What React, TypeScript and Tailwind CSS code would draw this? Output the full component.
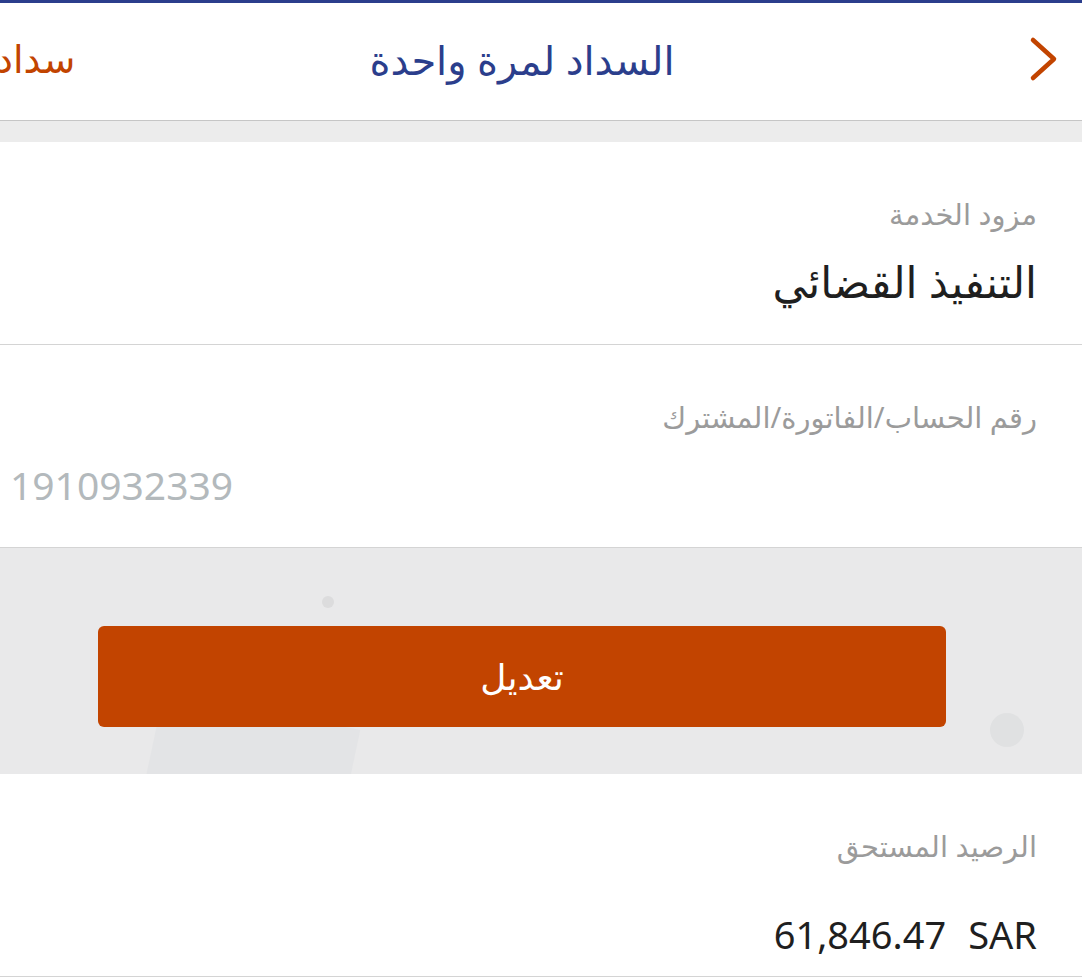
const font = { fontFamily: '"Noto Sans", "DejaVu Sans", sans-serif' }

function Field({ label, children }: { label: string; children: React.ReactNode }) {
  return (
    <div className="bg-white border-b border-[#d4d4d4] h-[203px] flex flex-col pr-[45px]">
      <div className="pt-[54px] text-[29px] leading-[36px] text-[#9b9b9b]">{label}</div>
      <div className="mt-[28px]">{children}</div>
    </div>
  )
}

export default function App() {
  return (
    <div dir="rtl" className="w-[1082px] h-[977px] overflow-hidden bg-white" style={font}>
      <div className="h-[3px] bg-[#2b3e8c]" />
      <header className="relative h-[118px] bg-white border-b border-[#c6c6c6] flex items-center justify-between">
        <svg viewBox="0 0 30 46" className="w-[30px] h-[46px] mr-[24px] mt-[-6px]" fill="none">
          <polyline points="5,4 26,23 5,42" stroke="#c24400" strokeWidth="4.5" strokeLinecap="round" strokeLinejoin="round" />
        </svg>
        <h1 className="absolute left-0 right-0 pr-[38px] mt-[-4px] text-center text-[40px] text-[#2b3e8c] pointer-events-none">
          السداد لمرة واحدة
        </h1>
        <span className="ml-[-4px] text-[38px] text-[#c24400] mt-[-6px]">سداد</span>
      </header>
      <div className="h-[21px] bg-[#ececec]" />

      <Field label="مزود الخدمة">
        <div className="text-[43px] leading-[44px] text-[#1f1f1f]">التنفيذ القضائي</div>
      </Field>

      <Field label="رقم الحساب/الفاتورة/المشترك">
        <div dir="ltr" className="text-left pl-[10px] text-[39px] leading-[44px] text-[#b3b9bc]">1910932339</div>
      </Field>

      <div className="relative h-[226px] bg-[#e9e9ea] flex items-start justify-start pt-[78px] overflow-hidden">
        <div className="absolute left-[150px] top-[160px] w-[200px] h-[120px] bg-[#e3e4e6] rotate-12" />
        <div className="absolute left-[990px] top-[165px] w-[34px] h-[34px] rounded-full bg-[#e0e1e2]" />
        <div className="absolute left-[322px] top-[48px] w-[12px] h-[12px] rounded-full bg-[#dcdcdd]" />
        <button className="relative mr-[136px] w-[848px] h-[101px] rounded-[6px] bg-[#c24400] text-white text-[36px]">
          تعديل
        </button>
      </div>

      <Field label="الرصيد المستحق">
        <div dir="ltr" className="text-right text-[38px] leading-[44px] text-[#1f1f1f] mt-[20px]">
          61,846.47<span className="ml-[22px]">SAR</span>
        </div>
      </Field>
    </div>
  )
}
